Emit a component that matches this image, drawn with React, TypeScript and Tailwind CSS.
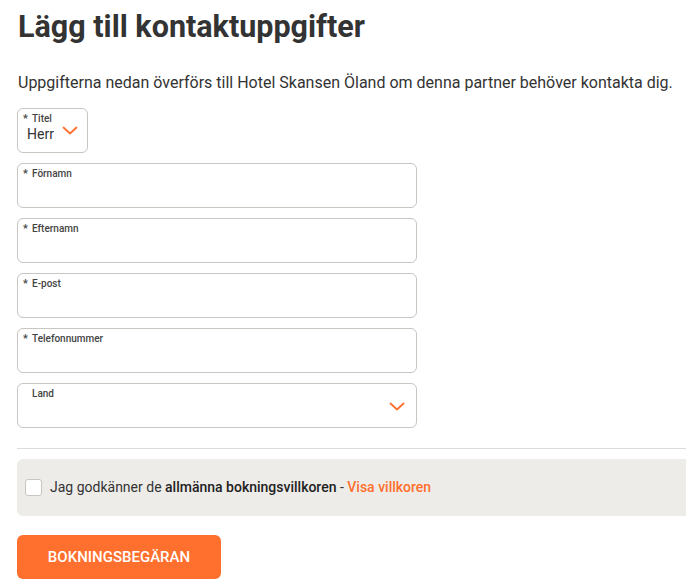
const fields = [
  { label: "Förnamn", required: true },
  { label: "Efternamn", required: true },
  { label: "E-post", required: true },
  { label: "Telefonnummer", required: true },
];

function Chevron({ className }: { className?: string }) {
  return (
    <svg viewBox="0 0 16 9" className={className} fill="none" stroke="#ff6f2d" strokeWidth={1.8} strokeLinecap="round" strokeLinejoin="round">
      <polyline points="1.5,1.5 8,7.5 14.5,1.5" />
    </svg>
  );
}

function Field({ label, required, select }: { label: string; required?: boolean; select?: boolean }) {
  return (
    <div className="relative h-[45px] w-[400px] rounded-md border border-[#c9c5c1] bg-white">
      <div className="flex items-start pl-[5px] pt-[4px] text-[10px] font-medium leading-[12px] text-[#444]">
        <span className="w-[9px] text-[11px] leading-[12px]">{required ? "*" : ""}</span>
        <span>{label}</span>
      </div>
      {select && <Chevron className="absolute right-[11px] top-[18px] h-[9px] w-[16px]" />}
    </div>
  );
}

export default function App() {
  return (
    <div className="min-h-[585px] bg-white font-['Roboto',sans-serif] text-[#333]">
      <div className="pl-[18px] pt-[8px]">
        <h1 className="text-[30.5px] font-bold leading-[38px] text-[#333]">Lägg till kontaktuppgifter</h1>
        <p className="mt-[27px] text-[16px] leading-[20px] text-[#333]">
          Uppgifterna nedan överförs till Hotel Skansen Öland om denna partner behöver kontakta dig.
        </p>
      </div>

      <div className="mt-[15px] flex flex-col gap-[10px] pl-[17px]">
        <div className="relative h-[45px] w-[71px] rounded-md border border-[#c9c5c1]">
          <div className="flex items-start pl-[5px] pt-[4px] text-[10px] font-medium leading-[12px] text-[#444]">
            <span className="w-[9px] text-[11px] leading-[12px]">*</span>
            <span>Titel</span>
          </div>
          <div className="flex items-center pl-[9px] pt-[1px]">
            <span className="text-[14px] leading-[16px]">Herr</span>
            <Chevron className="ml-[8px] h-[9px] w-[16px] -translate-y-[4px]" />
          </div>
        </div>
        {fields.map((f) => (
          <Field key={f.label} label={f.label} required={f.required} />
        ))}
        <Field label="Land" select />
      </div>

      <div className="mt-[20px] ml-[17px] border-t border-[#dcdcdc]" />

      <div className="mt-[10px] ml-[17px] flex h-[57px] items-center rounded-l-md bg-[#eeece9] pl-[8px]">
        <span className="h-[17px] w-[17px] rounded-[3px] border border-[#c9c5c1] bg-white" />
        <span className="ml-[8px] text-[14px] text-[#333]">
          Jag godkänner de <span className="font-medium text-[#222]">allmänna bokningsvillkoren</span> -{" "}
          <span className="font-medium text-[#ff6f2d]">Visa villkoren</span>
        </span>
      </div>

      <button className="ml-[17px] mt-[19px] flex h-[44px] w-[204px] items-center justify-center rounded-md bg-[#ff6f2d] text-[15px] font-medium text-white">
        BOKNINGSBEGÄRAN
      </button>
    </div>
  );
}
